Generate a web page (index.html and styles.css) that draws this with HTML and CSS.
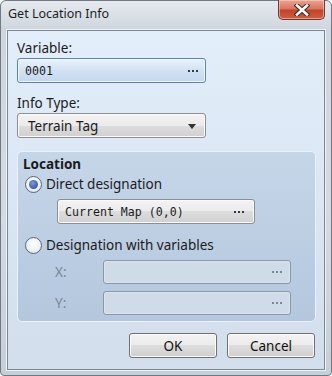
FILE: index.html
```html
<!DOCTYPE html>
<html lang="en">
<head>
  <meta charset="UTF-8" />
  <title>Get Location Info</title>
  <link rel="stylesheet" href="styles.css">
</head>
<body>
  <div class="window">
    <div class="titlebar">
      <span class="title">Get Location Info</span>
      <button class="close" title="Close">
        <svg width="16" height="12" viewBox="0 0 16 12">
          <path d="M3 1.5 L13 10.5 M13 1.5 L3 10.5" stroke="#3a2a28" stroke-width="4.6" stroke-linecap="square"/>
          <path d="M3 1.5 L13 10.5 M13 1.5 L3 10.5" stroke="#fff" stroke-width="2.6" stroke-linecap="square"/>
        </svg>
      </button>
    </div>

    <div class="client">
      <label class="label">Variable:</label>
      <div class="field field-active">
        <span class="mono">0001</span>
        <span class="dots"><i></i><i></i><i></i></span>
      </div>

      <label class="label label-gap">Info Type:</label>
      <div class="select">
        <span>Terrain Tag</span>
        <span class="arrow"></span>
      </div>

      <div class="group">
        <div class="group-title">Location</div>
        <div class="radio-row">
          <span class="radio checked"></span>
          <span>Direct designation</span>
        </div>
        <div class="pick">
          <span class="mono">Current Map (0,0)</span>
          <span class="dots"><i></i><i></i><i></i></span>
        </div>
        <div class="radio-row">
          <span class="radio"></span>
          <span>Designation with variables</span>
        </div>
        <div class="coord-row">
          <span class="coord-label">X:</span>
          <div class="field field-off"><span class="dots off"><i></i><i></i><i></i></span></div>
        </div>
        <div class="coord-row">
          <span class="coord-label">Y:</span>
          <div class="field field-off"><span class="dots off"><i></i><i></i><i></i></span></div>
        </div>
      </div>

      <div class="actions">
        <button class="btn">OK</button>
        <button class="btn">Cancel</button>
      </div>
    </div>
  </div>
</body>
</html>
```

FILE: styles.css
```css
body { margin: 0; font-family: "Noto Sans", sans-serif; font-size: 13.5px; color: #1b1b1b; }

.window {
  box-sizing: border-box;
  width: 332px;
  height: 376px;
  border: 1px solid #6f7a86;
  border-radius: 6px 6px 4px 4px;
  background: linear-gradient(to bottom, #e6eaef 0, #cfd6de 28px, #d3dae2 60%, #c6ced8 100%);
  padding: 0 6px 5px 6px;
  display: flex;
  flex-direction: column;
}

.titlebar { height: 29px; display: flex; justify-content: space-between; align-items: flex-start; }
.title { font-size: 12.5px; line-height: 14px; margin: 6px 0 0 1px; color: #1e1e1e; }
.close {
  width: 47px;
  height: 20px;
  margin-top: -1px;
  border: 1px solid #6e3a32;
  border-top: none;
  border-radius: 0 0 5px 5px;
  background: linear-gradient(to bottom, #e9a593 0, #d8765f 45%, #c2432b 55%, #cf5f3f 100%);
  box-shadow: inset 0 0 0 1px rgba(255,220,210,0.5);
  display: flex;
  align-items: center;
  justify-content: center;
  padding: 0;
}

.client {
  flex: 1;
  border: 1px solid #7d8793;
  box-shadow: 0 0 0 1px #eef2f6;
  background: linear-gradient(to bottom, #e3eefb, #d2deec);
  padding: 9px 8px 0 9px;
  display: flex;
  flex-direction: column;
  align-items: flex-start;
}

.label { line-height: 16px; height: 16px; margin-bottom: 2px; }
.label-gap { margin-top: 12px; }

.mono { font-family: "DejaVu Sans Mono", monospace; font-size: 11.6px; }

.field, .select, .pick {
  box-sizing: border-box;
  height: 25px;
  display: flex;
  align-items: center;
  justify-content: space-between;
  border-radius: 3px;
}
.field-active {
  width: 189px;
  border: 1px solid #5a82b4;
  background: linear-gradient(to bottom, #e9f2fc, #d2e2f4 50%, #c4d7ee);
  box-shadow: inset 0 0 0 1px #f2f7fd;
  padding: 0 7px 0 7px;
}
.select {
  width: 189px;
  border: 1px solid #8c8e91;
  background: linear-gradient(to bottom, #f3f3f3 0, #ebebeb 50%, #dddddd 50%, #d0d0d0 100%);
  box-shadow: inset 0 0 0 1px #fafafa;
  padding: 0 9px 0 10px;
}
.arrow { width: 0; height: 0; border-left: 4px solid transparent; border-right: 4px solid transparent; border-top: 5px solid #333; margin-top: 1px; }

.dots { display: flex; gap: 2px; }
.dots i { width: 2px; height: 2px; background: #2e3a48; }
.dots.off i { background: #7c8792; }

.group {
  box-sizing: border-box;
  width: 299px;
  margin-top: 13px;
  border: 1px solid #eaf1f9;
  border-radius: 5px;
  background: linear-gradient(to bottom, #c6d6e9, #b4c7dd);
  padding: 4px 6px 6px 5px;
  display: flex;
  flex-direction: column;
  align-items: flex-start;
}
.group-title { font-weight: bold; line-height: 16px; height: 16px; }

.radio-row { display: flex; align-items: center; gap: 4px; height: 18px; margin: 3px 0 0 2px; line-height: 18px; }
.radio {
  box-sizing: border-box;
  width: 17px;
  height: 17px;
  border-radius: 50%;
  border: 1px solid #56677b;
  background: radial-gradient(circle at 50% 40%, #ffffff, #eceff3 60%, #d4d9e0);
  display: flex;
  align-items: center;
  justify-content: center;
}
.radio.checked::after {
  content: "";
  width: 9px;
  height: 9px;
  border-radius: 50%;
  background: radial-gradient(circle at 40% 35%, #7a9ad6, #3b5eab 70%, #2f4f93);
}

.pick {
  width: 198px;
  margin: 6px 0 9px 34px;
  border: 1px solid #8c8e91;
  background: linear-gradient(to bottom, #f3f3f3 0, #ebebeb 50%, #dddddd 50%, #d0d0d0 100%);
  box-shadow: inset 0 0 0 1px #fafafa;
  padding: 0 10px 0 7px;
}

.coord-row { display: flex; align-items: center; margin: 6px 0 0 32px; }
.coord-row + .coord-row { margin-top: 7px; }
.coord-label { width: 48px; color: #7b8896; }
.field-off {
  width: 188px;
  height: 24px;
  justify-content: flex-end;
  border: 1px solid #8a97a6;
  background: #cfdbe7;
  box-shadow: inset 0 0 0 1px #dae4ee;
  padding: 0 8px;
}

.actions { align-self: stretch; display: flex; justify-content: flex-end; gap: 10px; margin: 11px 1px 0 0; }
.btn {
  box-sizing: border-box;
  width: 88px;
  height: 25px;
  border: 1px solid #707070;
  border-radius: 3px;
  background: linear-gradient(to bottom, #f2f2f2 0, #ebebeb 50%, #dddddd 50%, #cfcfcf 100%);
  box-shadow: inset 0 0 0 1px #fbfbfb;
  font-family: "Noto Sans", sans-serif;
  font-size: 13.5px;
  color: #111;
  padding: 0;
}
```
